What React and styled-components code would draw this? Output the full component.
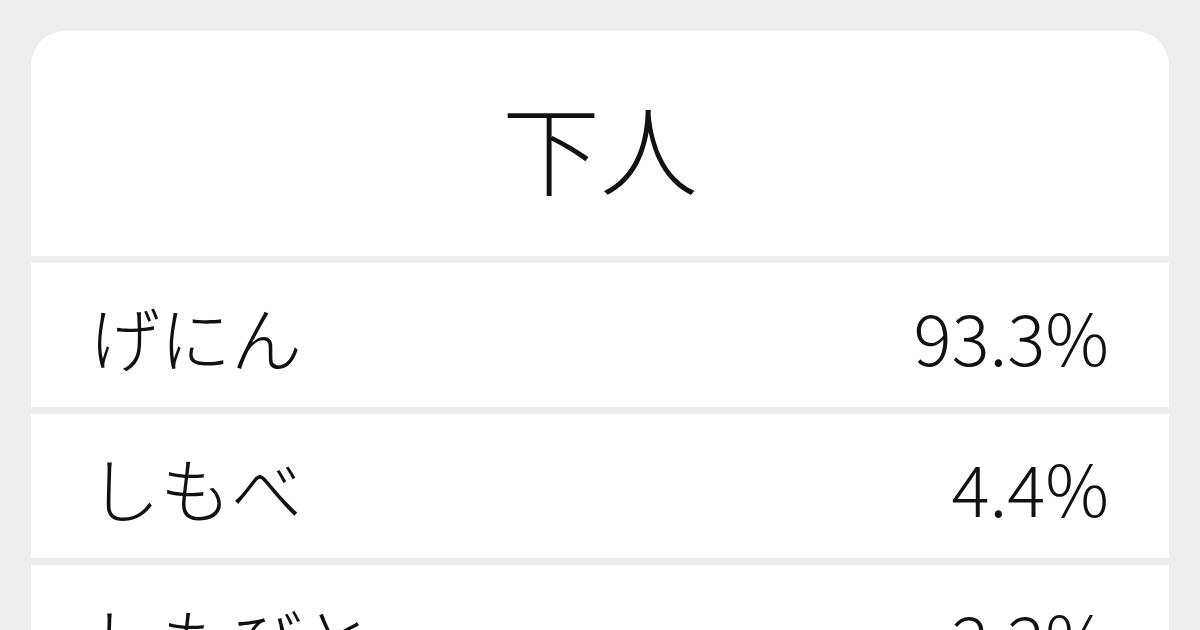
import React from "react";
import styled, { createGlobalStyle } from "styled-components";

const GlobalStyle = createGlobalStyle`
  html, body {
    margin: 0;
    padding: 0;
    background: #ededed;
    overflow: hidden;
  }
  body {
    font-family: "Noto Sans CJK JP", "Noto Sans", sans-serif;
    color: #111;
  }
`;

const Page = styled.div`
  width: 1200px;
  height: 630px;
  padding: 31px 31px 0;
  box-sizing: border-box;
  overflow: hidden;
`;

const Card = styled.div`
  display: flex;
  flex-direction: column;
  gap: 7px;
  background: #ededed;
  border-radius: 34px 34px 0 0;
  overflow: hidden;
`;

const Header = styled.div`
  height: 225px;
  background: #fff;
  display: flex;
  align-items: center;
  justify-content: center;
  padding-top: 2px;
  box-sizing: border-box;
`;

const Title = styled.h1`
  margin: 0;
  font-size: 98px;
  font-weight: 300;
  line-height: 1;
  letter-spacing: 0;
`;

const Row = styled.div`
  height: 144px;
  background: #fff;
  display: flex;
  align-items: center;
  justify-content: space-between;
  padding: 0 60px 0 58px;
  box-sizing: border-box;
  font-size: 71px;
  font-weight: 300;
  line-height: 1;
`;

const Reading = styled.span``;

const Percent = styled.span``;

const readings = [
  { kana: "げにん", pct: "93.3%" },
  { kana: "しもべ", pct: "4.4%" },
  { kana: "しもびと", pct: "2.2%" },
];

export default function App() {
  return (
    <>
      <GlobalStyle />
      <Page>
        <Card>
          <Header>
            <Title>下人</Title>
          </Header>
          {readings.map((r) => (
            <Row key={r.kana}>
              <Reading>{r.kana}</Reading>
              <Percent>{r.pct}</Percent>
            </Row>
          ))}
        </Card>
      </Page>
    </>
  );
}
